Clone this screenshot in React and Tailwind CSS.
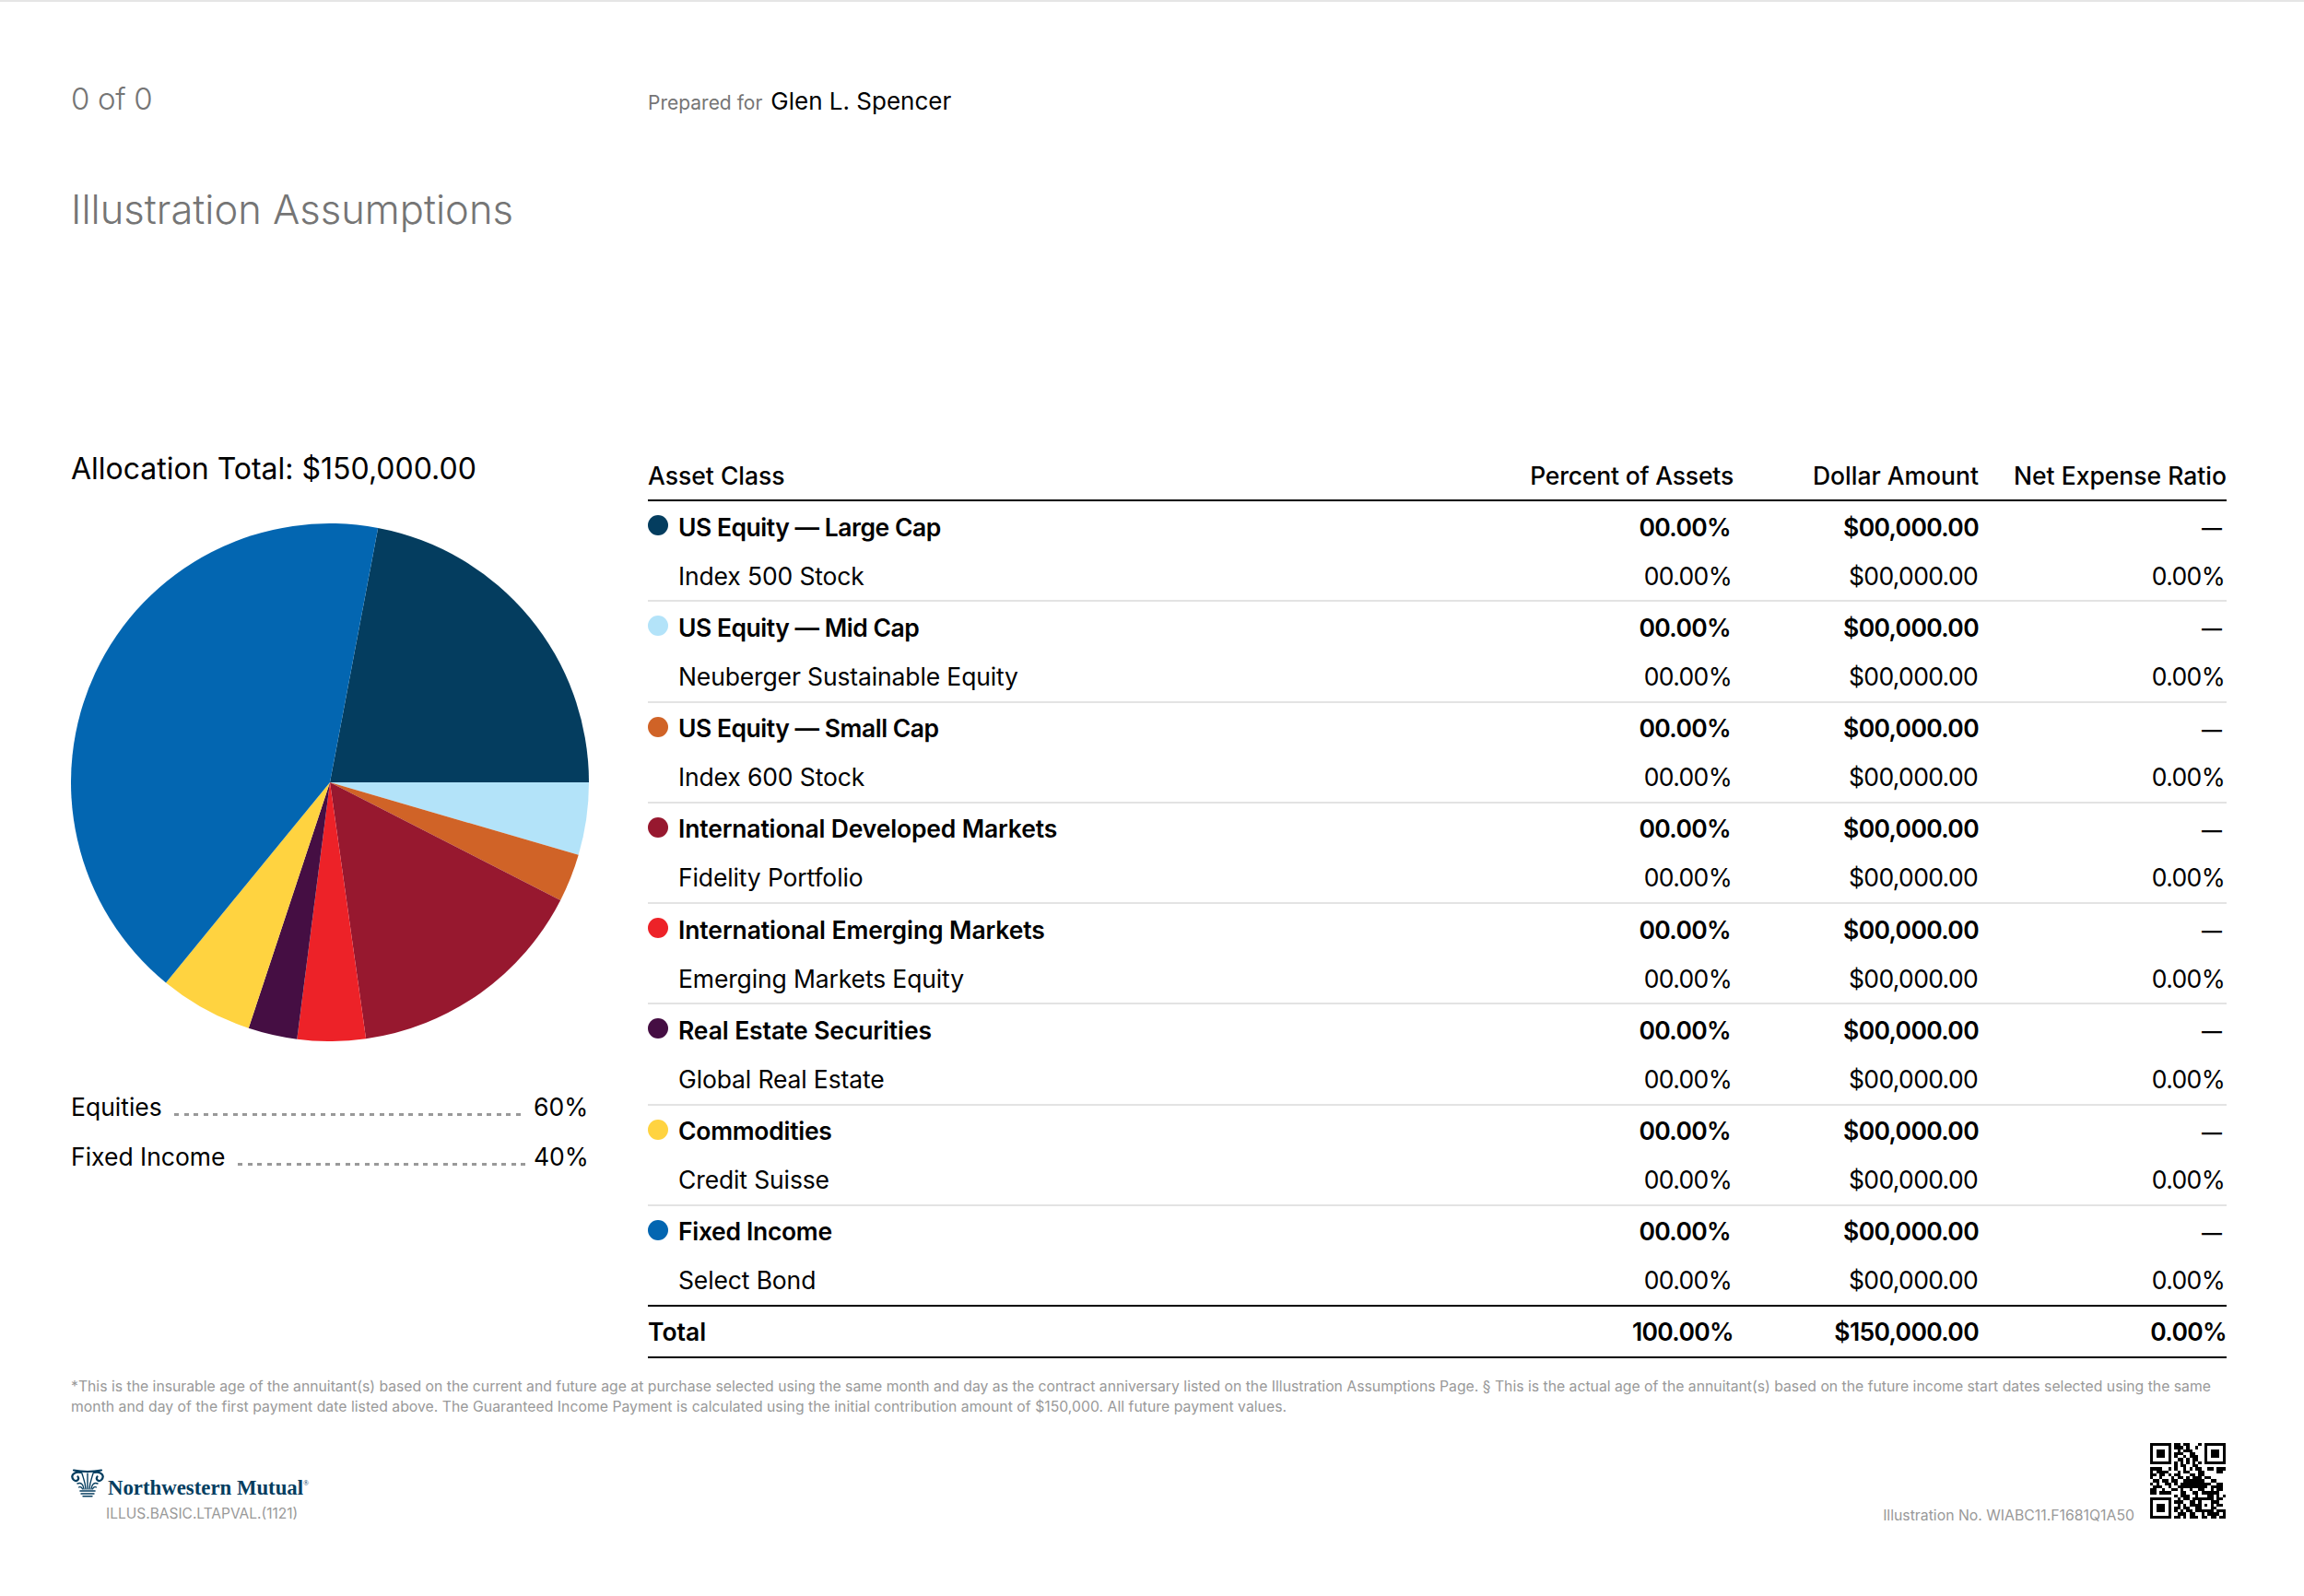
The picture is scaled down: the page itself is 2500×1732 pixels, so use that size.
import React from 'react';

const rows = [
  { name: 'US Equity — Large Cap', fund: 'Index 500 Stock', color: 'bg-[#043d5f]', track: 'tracking-[-0.018em]' },
  { name: 'US Equity — Mid Cap', fund: 'Neuberger Sustainable Equity', color: 'bg-[#b3e3f9]', track: 'tracking-[-0.018em]' },
  { name: 'US Equity — Small Cap', fund: 'Index 600 Stock', color: 'bg-[#d06327]', track: 'tracking-[-0.018em]' },
  { name: 'International Developed Markets', fund: 'Fidelity Portfolio', color: 'bg-[#97182f]', track: 'tracking-[-0.006em]' },
  { name: 'International Emerging Markets', fund: 'Emerging Markets Equity', color: 'bg-[#ed2228]', track: 'tracking-[-0.004em]' },
  { name: 'Real Estate Securities', fund: 'Global Real Estate', color: 'bg-[#450e43]', track: 'tracking-[-0.004em]' },
  { name: 'Commodities', fund: 'Credit Suisse', color: 'bg-[#ffd340]', track: 'tracking-[-0.01em]' },
  { name: 'Fixed Income', fund: 'Select Bond', color: 'bg-[#0366b1]', track: 'tracking-[-0.012em]' },
];

const slices = [
  { from: 10.7, to: 90, fill: '#043d5f' },
  { from: 90, to: 106.3, fill: '#b3e3f9' },
  { from: 106.3, to: 117.1, fill: '#d06327' },
  { from: 117.1, to: 172, fill: '#97182f' },
  { from: 172, to: 187.3, fill: '#ed2228' },
  { from: 187.3, to: 198.3, fill: '#450e43' },
  { from: 198.3, to: 219.3, fill: '#ffd340' },
  { from: 219.3, to: 370.7, fill: '#0366b1' },
];

const qr = [
  '1111111011011000101111111',
  '1000001011101001001000001',
  '1011101001011100001011101',
  '1011101011100110001011101',
  '1011101010010111001011101',
  '1000001001101011001000001',
  '1111111010101010101111111',
  '0000000010110011000000000',
  '1111001010010101100110111',
  '1011110001011000110000110',
  '1101101011000110110000000',
  '1001000101101011101100000',
  '0110110110011111110011000',
  '1010011010111111111100110',
  '0111001001111111111011110',
  '1100100110100100110010110',
  '1101111000110011011111100',
  '0000000010111001000110101',
  '1111111001011011111110110',
  '1000001011100110100011100',
  '1011101001010111101010110',
  '1011101011011001100011000',
  '1011101010101101111110111',
  '1000001001110110010111101',
  '1111111011010111011011011',
];

const point = (deg) => {
  const rad = (deg * Math.PI) / 180;
  return `${281 + 281 * Math.sin(rad)} ${281 - 281 * Math.cos(rad)}`;
};

const PieChart = () => (
  <svg viewBox="0 0 562 562" className="w-[562px] h-[562px] block">
    {slices.map((s) => (
      <path
        key={s.from}
        d={`M281 281 L${point(s.from)} A281 281 0 ${s.to - s.from > 180 ? 1 : 0} 1 ${point(s.to)} Z`}
        fill={s.fill}
      />
    ))}
  </svg>
);

const QrCode = () => (
  <svg viewBox="0 0 25 25" className="w-[82px] h-[82px] block" shapeRendering="crispEdges">
    {qr.map((row, y) =>
      row.split('').map((cell, x) =>
        cell === '1' ? <rect key={`${x}-${y}`} x={x} y={y} width="1" height="1" fill="#000" /> : null
      )
    )}
  </svg>
);

const LogoMark = () => (
  <svg viewBox="0 0 36 31" className="w-[36px] h-[31px] block" fill="none" stroke="#043d5f" strokeLinecap="round">
    <path d="M3 1.5 Q18 4.5 33 1.5" strokeWidth="2.2" />
    <path d="M11 4 C3 2 -1 8 3 12 C6 14.5 9.5 11.5 7.5 8.5" strokeWidth="2.2" />
    <path d="M25 4 C33 2 37 8 33 12 C30 14.5 26.5 11.5 28.5 8.5" strokeWidth="2.2" />
    <path d="M18 22 L18 5" strokeWidth="1.4" />
    <path d="M16 22 C15.5 14 13 9 12 5" strokeWidth="1.4" />
    <path d="M20 22 C20.5 14 23 9 24 5" strokeWidth="1.4" />
    <path d="M14 22 C13.5 17 11 14.5 7 16" strokeWidth="1.4" />
    <path d="M22 22 C22.5 17 25 14.5 29 16" strokeWidth="1.4" />
    <path d="M12.5 22 C12 20 10 19 8.5 20" strokeWidth="1.2" />
    <path d="M23.5 22 C24 20 26 19 27.5 20" strokeWidth="1.2" />
    <path d="M10 24 L26 24" strokeWidth="1.6" />
    <path d="M11 27 L25 27" strokeWidth="1.4" />
    <path d="M13 29.8 L23 29.8" strokeWidth="1.4" />
  </svg>
);

const Leader = ({ label, value }) => (
  <div className="flex items-baseline h-[54px] leading-[54px] text-[26.5px] text-black pr-[4px]">
    <span>{label}</span>
    <span className="flex-1 ml-[13px] mr-[8px] h-[3px] bg-[repeating-linear-gradient(90deg,#999999_0,#999999_5px,transparent_5px,transparent_10.6px)]" />
    <span className="w-[56px] text-right">{value}</span>
  </div>
);

const App = () => {
  return (
    <div className="w-[2500px] h-[1732px] bg-white border-t-2 border-[#e5e5e5] pl-[77px] pr-[84px] pt-[84px] font-['Inter',sans-serif] overflow-hidden">
      <div className="flex items-baseline h-[42px]">
        <div className="w-[626px] text-[33px] leading-[42px] text-[#757575] font-light tracking-[-0.01em]">0 of 0</div>
        <span className="text-[21px] text-[#757575]">Prepared for</span>
        <span className="ml-[9px] text-[26px] text-black">Glen L. Spencer</span>
      </div>

      <h1 className="mt-[73px] text-[43.5px] leading-[52px] text-[#757575] font-light">Illustration Assumptions</h1>

      <div className="flex mt-[237px]">
        <div className="w-[562px] mr-[64px]">
          <div className="h-[38px] leading-[38px] text-[32px] text-black whitespace-nowrap">Allocation Total: $150,000.00</div>
          <div className="mt-[40px]">
            <PieChart />
          </div>
          <div className="mt-[44px]">
            <Leader label="Equities" value="60%" />
            <Leader label="Fixed Income" value="40%" />
          </div>
        </div>

        <div className="flex-1 text-[26.5px] text-black">
          <div className="grid grid-cols-[1fr_300px_266px_269px] h-[54px] pt-[2px] items-center font-medium border-b-2 border-black whitespace-nowrap">
            <div>Asset Class</div>
            <div className="text-right tracking-[-0.007em]">Percent of Assets</div>
            <div className="text-right">Dollar Amount</div>
            <div className="text-right">Net Expense Ratio</div>
          </div>
          {rows.map((row, i) => (
            <div
              key={row.name}
              className={i < rows.length - 1 ? 'h-[109.25px] border-b-2 border-[#e3e3e3]' : 'h-[107.25px]'}
            >
              <div className="grid grid-cols-[1fr_300px_266px_269px] h-[57px] items-center font-semibold">
                <div className={`flex items-center ${row.track}`}>
                  <span className={`w-[22px] h-[22px] rounded-full mr-[11px] -mt-[5px] ${row.color}`} />
                  {row.name}
                </div>
                <div className="text-right pr-[3px] tracking-[-0.025em]">00.00%</div>
                <div className="text-right tracking-[-0.025em]">$00,000.00</div>
                <div className="text-right pr-[5px] pt-[2px] text-[22px]">—</div>
              </div>
              <div className="grid grid-cols-[1fr_300px_266px_269px] h-[49px] items-center">
                <div className="pl-[33px] tracking-[-0.005em]">{row.fund}</div>
                <div className="text-right pr-[2px] tracking-[-0.025em]">00.00%</div>
                <div className="text-right pr-[1px] tracking-[-0.025em]">$00,000.00</div>
                <div className="text-right pr-[2px] tracking-[-0.025em]">0.00%</div>
              </div>
            </div>
          ))}
          <div className="grid grid-cols-[1fr_300px_266px_269px] h-[58px] pt-[2px] items-center font-semibold border-y-2 border-black">
            <div>Total</div>
            <div className="text-right tracking-[-0.025em]">100.00%</div>
            <div className="text-right tracking-[-0.025em]">$150,000.00</div>
            <div className="text-right tracking-[-0.025em]">0.00%</div>
          </div>
        </div>
      </div>

      <p className="mt-[20px] text-[15.75px] leading-[21.5px] text-[#999999] whitespace-nowrap">
        *This is the insurable age of the annuitant(s) based on the current and future age at purchase selected using the same month and day as the contract anniversary listed on the Illustration Assumptions Page. § This is the actual age of the annuitant(s) based on the future income start dates selected using the same
        <br />
        <span className="tracking-[0.03px]">month and day of the first payment date listed above. The Guaranteed Income Payment is calculated using the initial contribution amount of $150,000. All future payment values.</span>
      </p>

      <div className="flex justify-between items-start mt-[29px]">
        <div className="pt-[28px]">
          <div className="flex items-end">
            <LogoMark />
            <span className="ml-[4px] mb-[-8px] font-['Liberation_Serif',serif] font-bold text-[22.8px] leading-[26px] text-[#043d5f] whitespace-nowrap">
              Northwestern Mutual
              <span className="relative -top-[10px] text-[8px] font-normal">®</span>
            </span>
          </div>
          <div className="ml-[38px] mt-[9px] text-[15.5px] leading-[18px] text-[#999999]">ILLUS.BASIC.LTAPVAL.(1121)</div>
        </div>
        <div className="flex items-end mr-[1px]">
          <span className="text-[15.8px] leading-[18px] text-[#999999] mr-[17px] mb-[-6px]">Illustration No. WIABC11.F1681Q1A50</span>
          <QrCode />
        </div>
      </div>
    </div>
  );
};

export default App;
